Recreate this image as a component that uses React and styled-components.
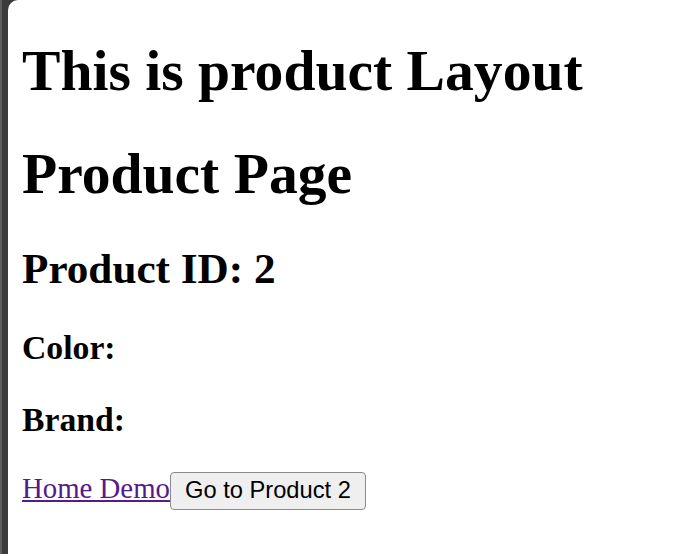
import React from 'react';
import styled, { createGlobalStyle } from 'styled-components';

const GlobalStyle = createGlobalStyle`
    html, body {
        margin: 0;
        padding: 0;
        height: 100%;
        background: #3d3d3d;
    }
    #root {
        min-height: 100%;
        display: flex;
    }
`;

const Shell = styled.div`
    flex: 1;
    display: flex;
    min-height: 554px;
    background: #3b3b3b;
    border-left: 2px solid #5e5e5e;
`;

const Page = styled.div`
    flex: 1;
    margin-left: 6px;
    background: #fff;
    border-top-left-radius: 10px;
    padding: 0 14px;
    font-family: "Liberation Serif", "Times New Roman", serif;
    font-size: 28.8px;
    color: #000;
`;

const Title = styled.h1`
    font-size: 2em;
    font-weight: bold;
    margin: 0.66em 0;
`;

const SubTitle = styled.h2`
    font-size: 1.5em;
    font-weight: bold;
    margin: 0.83em 0;
`;

const Field = styled.h3`
    font-size: 1.17em;
    font-weight: bold;
    margin: 1em 0;
`;

const Actions = styled.div`
    margin: 1.17em 0;
    line-height: normal;
`;

const HomeLink = styled.a`
    color: #551a8b;
    text-decoration: underline;
    cursor: pointer;
`;

const GoButton = styled.button`
    font-family: "Liberation Sans", Arial, sans-serif;
    font-size: 23.7px;
    color: #000;
    background: #efefef;
    border: 1px solid #8a8a8a;
    border-radius: 4px;
    padding: 4px 14px 5px;
    margin: 0;
    vertical-align: baseline;
    cursor: pointer;
`;

export default function App() {
    const id = 2;
    return (
        <>
            <GlobalStyle />
            <Shell>
                <Page>
                    <Title>This is product Layout</Title>
                    <Title>Product Page</Title>
                    <SubTitle>Product ID: {id}</SubTitle>
                    <Field>Color: </Field>
                    <Field>Brand: </Field>
                    <Actions>
                        <HomeLink href="#">Home Demo</HomeLink>
                        <GoButton>Go to Product {id}</GoButton>
                    </Actions>
                </Page>
            </Shell>
        </>
    );
}
